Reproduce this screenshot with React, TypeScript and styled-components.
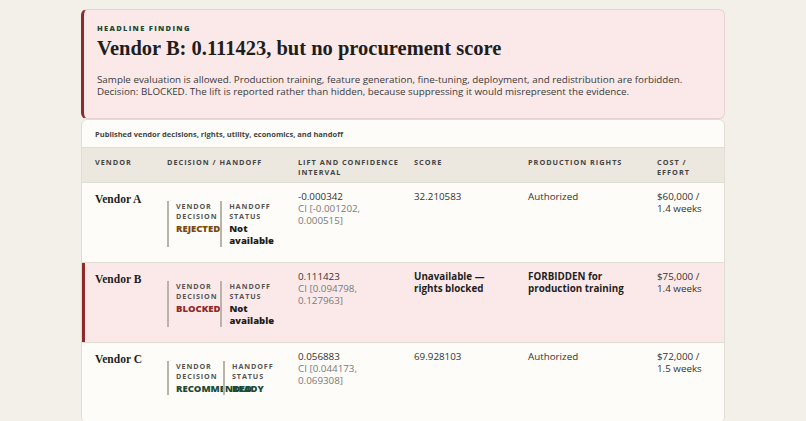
import React from "react";
import styled, { createGlobalStyle } from "styled-components";

const G = createGlobalStyle`
  body{margin:0;background:#f3f0ea;font-family:"Open Sans","Noto Sans",sans-serif;color:#2b2b2b;}
`;
const Page = styled.div`width:644px;margin:0 auto;padding-top:9px;display:flex;flex-direction:column;`;
const Hero = styled.section`
  background:#fbe9e9;border:1px solid #e6d2d2;border-left:3px solid #8e2a2a;border-radius:6px;
  padding:13px 14px 20px 13px;`;
const Eyebrow = styled.div`font-size:7.5px;font-weight:800;letter-spacing:1.3px;color:#1e4a37;text-transform:uppercase;`;
const H1 = styled.h1`font-family:"Liberation Serif","DejaVu Serif",serif;font-size:20.5px;font-weight:700;margin:4px 0 14px;color:#1e1e1e;`;
const P = styled.p`margin:0;font-size:9.8px;line-height:12px;color:#3a3a3a;`;
const Card = styled.section`background:#fdfcf8;border:1px solid #e2ddd2;border-radius:6px;overflow:hidden;`;
const Cap = styled.div`font-size:7.5px;font-weight:700;color:#444;padding:9px 13px 8px;`;
const Row = styled.div<{ $hl?: boolean; $head?: boolean }>`
  display:grid;grid-template-columns:85px 131px 116px 114px 129px 69px;
  background:${p => p.$head ? "#ece8df" : p.$hl ? "#fbe9e9" : "#fdfcf8"};
  border-top:1px solid #e2ddd2;
  ${p => p.$hl ? "box-shadow: inset 3px 0 0 #8e2a2a;" : ""}
  height:${p => p.$head ? "35px" : "80px"};
  padding-top:${p => p.$head ? "9px" : "8px"};box-sizing:border-box;
  & > div:first-child{padding-left:13px;}
`;
const Th = styled.div`font-size:7.3px;font-weight:700;letter-spacing:1px;color:#444;text-transform:uppercase;line-height:10px;padding-right:14px;`;
const Cell = styled.div`font-size:9.8px;line-height:12px;color:#333;padding-right:14px;`;
const Name = styled.div`font-family:"Liberation Serif",serif;font-weight:700;font-size:11.5px;color:#1e1e1e;padding-top:2px;`;
const Muted = styled.div`color:#7a7a7a;`;
const Strong = styled.div`font-weight:700;color:#1e1e1e;`;
const Dec = styled.div`display:flex;margin-top:10px;`;
const Sub = styled.div<{ $w: number }>`width:${p => p.$w}px;border-left:2px solid #b9b4aa;padding:0 0 0 7px;box-sizing:border-box;`;
const SubL = styled.div`font-size:7.2px;font-weight:700;letter-spacing:0.9px;color:#555;line-height:10px;`;
const SubV = styled.div<{ $c: string }>`font-size:9.5px;font-weight:800;color:${p => p.$c};line-height:12px;margin-top:2px;white-space:nowrap;`;

const rows = [
  { n: "Vendor A", d: "REJECTED", dc: "#7a4a12", h: ["Not", "available"], lift: "-0.000342", ci: "CI [-0.001202, 0.000515]", s: "32.210583", r: "Authorized", c: "$60,000 / 1.4 weeks" },
  { n: "Vendor B", d: "BLOCKED", dc: "#8e2a2a", h: ["Not", "available"], lift: "0.111423", ci: "CI [0.094798, 0.127963]", s: "Unavailable — rights blocked", r: "FORBIDDEN for production training", c: "$75,000 / 1.4 weeks", hl: true },
  { n: "Vendor C", d: "RECOMMENDED", dc: "#1e4a37", h: ["READY"], lift: "0.056883", ci: "CI [0.044173, 0.069308]", s: "69.928103", r: "Authorized", c: "$72,000 / 1.5 weeks" },
];

export default function App() {
  return (
    <Page>
      <G />
      <Hero>
        <Eyebrow>Headline finding</Eyebrow>
        <H1>Vendor B: 0.111423, but no procurement score</H1>
        <P>Sample evaluation is allowed. Production training, feature generation, fine-tuning, deployment, and redistribution are forbidden. Decision: BLOCKED. The lift is reported rather than hidden, because suppressing it would misrepresent the evidence.</P>
      </Hero>
      <Card>
        <Cap>Published vendor decisions, rights, utility, economics, and handoff</Cap>
        <Row $head>
          <Th>Vendor</Th><Th>Decision / Handoff</Th><Th>Lift and confidence interval</Th><Th>Score</Th><Th>Production rights</Th><Th>Cost / effort</Th>
        </Row>
        {rows.map(r => (
          <Row key={r.n} $hl={r.hl}>
            <Name>{r.n}</Name>
            <Cell>
              <Dec>
                <Sub $w={56}><SubL>VENDOR<br />DECISION</SubL><SubV $c={r.dc}>{r.d}</SubV></Sub>
                <Sub $w={70}><SubL>HANDOFF<br />STATUS</SubL><SubV $c={r.h.length === 1 ? "#1e4a37" : "#1e1e1e"}>{r.h.map(x => <div key={x}>{x}</div>)}</SubV></Sub>
              </Dec>
            </Cell>
            <Cell>{r.lift}<Muted>{r.ci}</Muted></Cell>
            <Cell>{r.hl ? <Strong>{r.s}</Strong> : r.s}</Cell>
            <Cell>{r.hl ? <Strong>{r.r}</Strong> : r.r}</Cell>
            <Cell>{r.c}</Cell>
          </Row>
        ))}
      </Card>
      <Card style={{ marginTop: 2, height: 20 }} />
    </Page>
  );
}
